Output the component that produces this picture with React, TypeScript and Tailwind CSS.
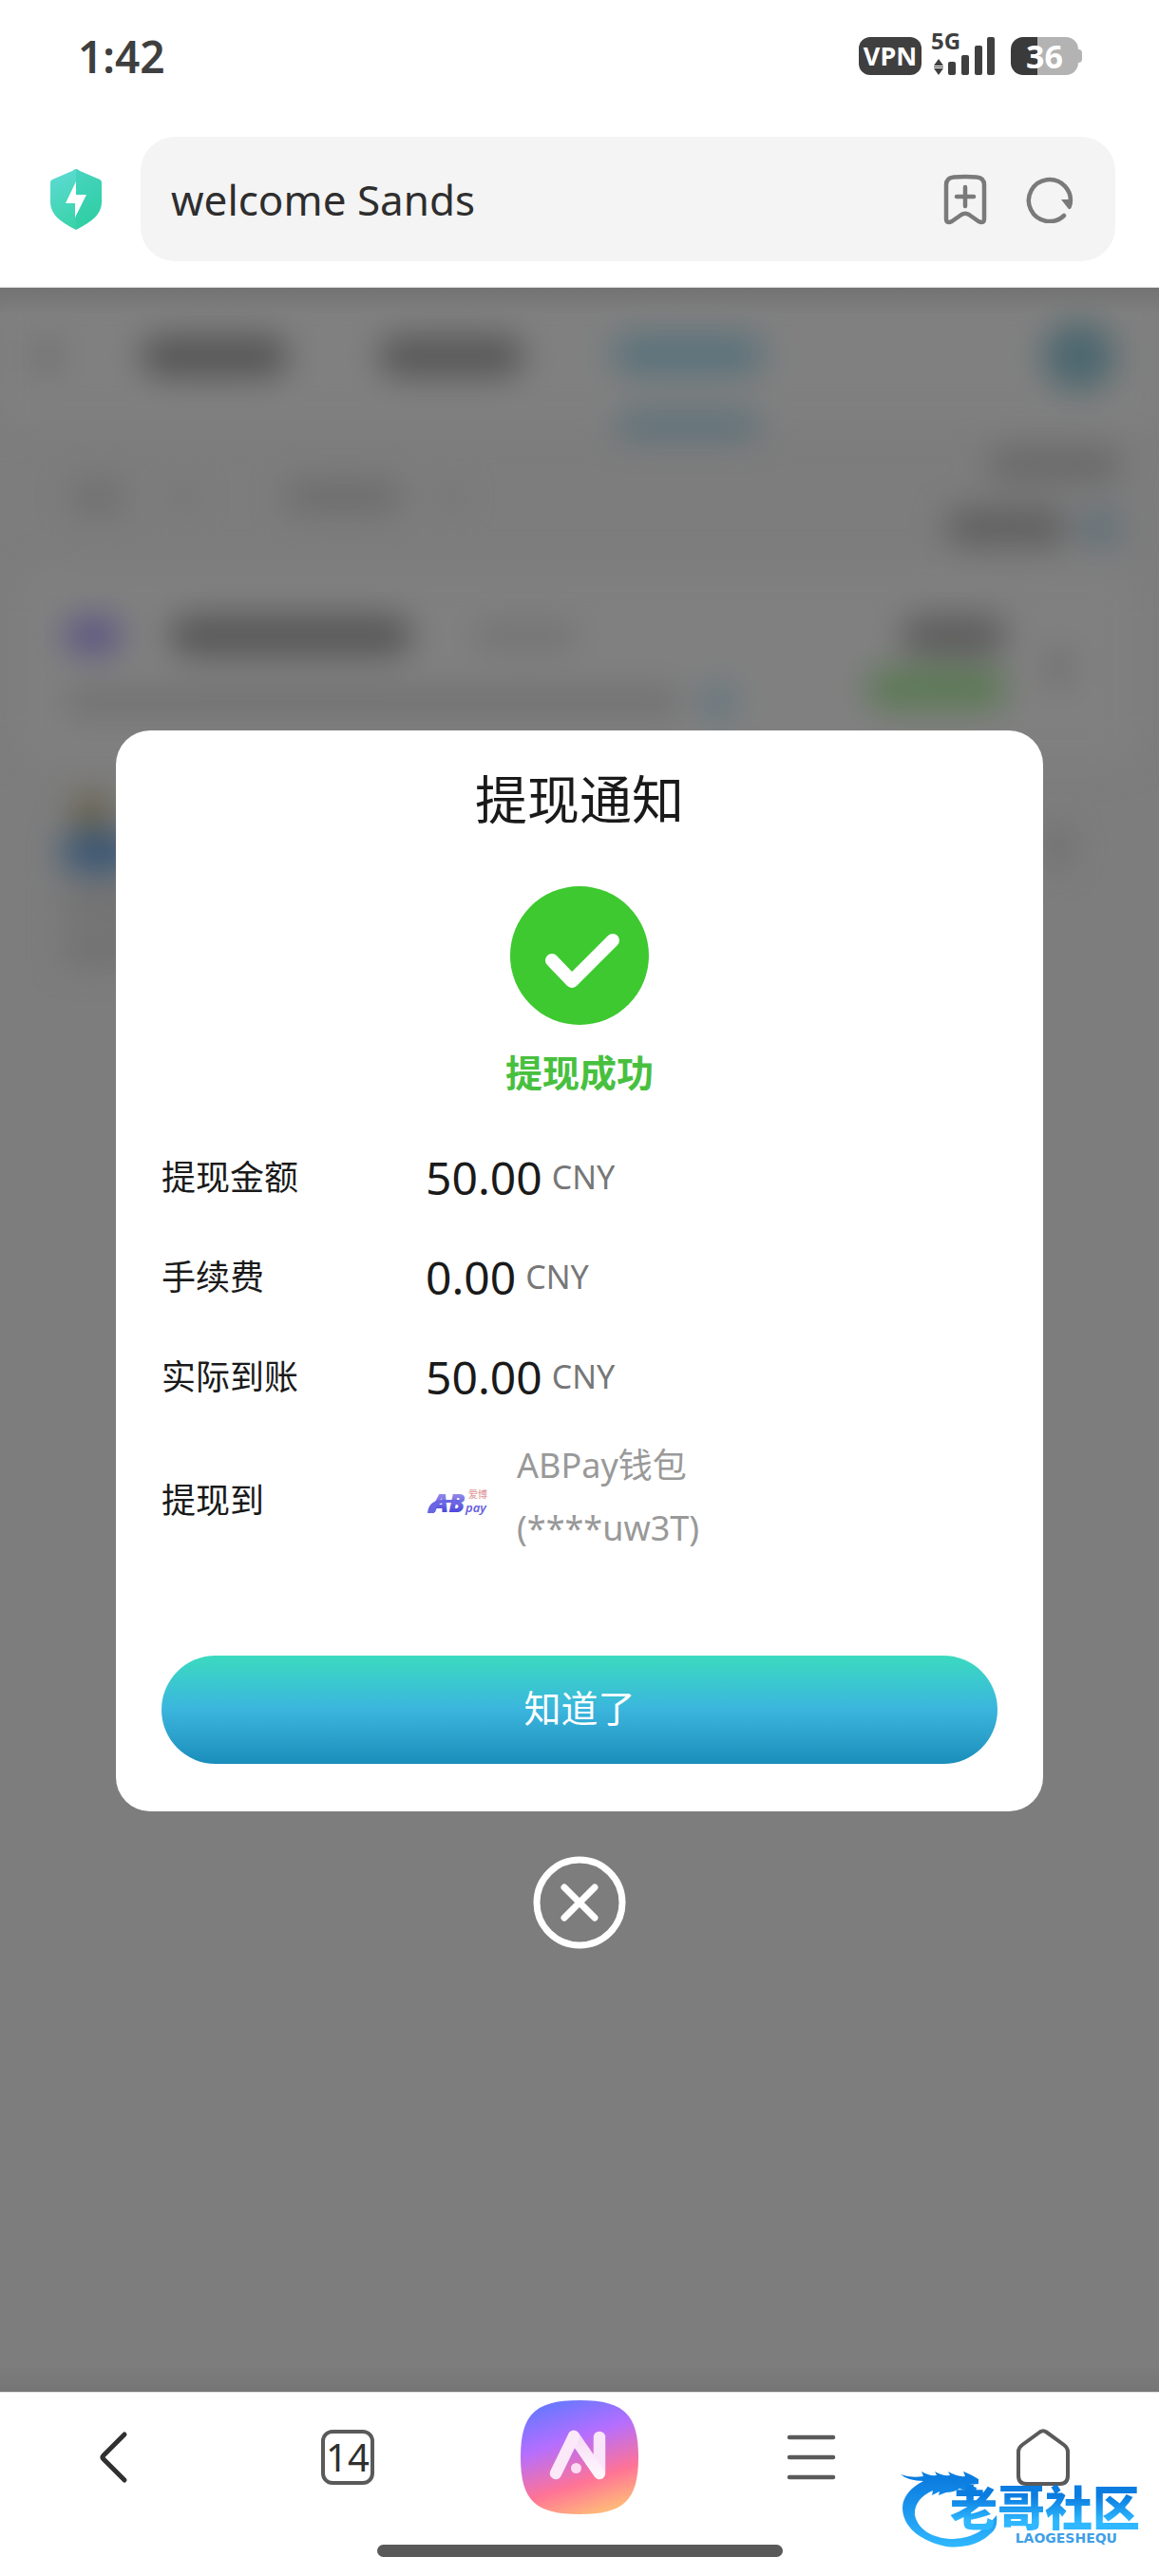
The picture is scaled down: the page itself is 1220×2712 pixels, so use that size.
import type { ReactNode } from "react";

const amounts = [
  { label: "提现金额", value: "50.00" },
  { label: "手续费", value: "0.00" },
  { label: "实际到账", value: "50.00" },
];

function StatusBar() {
  return (
    <div className="flex h-[118px] items-center justify-between pl-[82px] pr-[81px] text-[#3f3f3f]">
      <span className="text-[46px] font-semibold leading-[60px]">1:42</span>
      <div className="flex items-center">
        <span className="flex h-10 w-[66px] items-center justify-center rounded-xl bg-[#3f3f3f] text-[27px] font-bold text-white">
          VPN
        </span>
        <div className="relative ml-2 mr-4 h-10 w-[70px]">
          <span className="absolute -top-2 left-0.5 text-[24px] font-bold leading-6">5G</span>
          <svg viewBox="0 0 70 40" className="h-full w-full" fill="currentColor">
            <path d="M10 23l5 7H5zM10 40l5-7H5zM5 31h10v1H5z" />
            <rect x="20" y="26" width="8" height="14" rx="2" />
            <rect x="34" y="19" width="8" height="21" rx="2" />
            <rect x="48" y="9" width="8" height="31" rx="2" />
            <rect x="61" y="0" width="8" height="40" rx="2" />
          </svg>
        </div>
        <div className="flex items-center">
          <span className="flex h-10 w-[71px] items-center justify-center rounded-[13px] bg-linear-to-r from-[#3a3a3a] from-40% to-[#b3b3b3] to-40% text-[34px] font-bold text-white">
            36
          </span>
          <span className="h-3.5 w-1 rounded-r-sm bg-[#b3b3b3]" />
        </div>
      </div>
    </div>
  );
}

function AddressBar() {
  return (
    <div className="flex items-center pl-[52px] pr-[46px] pt-[26px] pb-[27px]">
      <svg viewBox="0 0 56 64" className="mr-10 h-16 w-14 shrink-0">
        <defs>
          <linearGradient id="shield" x1="0" y1="0" x2="0.4" y2="1">
            <stop offset="0" stopColor="#5fdbd6" />
            <stop offset="1" stopColor="#38d3a8" />
          </linearGradient>
        </defs>
        <path
          d="M28 0Q30 0 32 2L53 11Q55 12 55 14V34C55 48 45 55 28 64C11 55 1 48 1 34V14Q1 12 3 11L24 2Q26 0 28 0Z"
          fill="url(#shield)"
        />
        <path d="M28 0Q30 0 32 2L53 11Q55 12 55 14V34C55 48 45 55 28 64Z" fill="#22c7a0" opacity="0.3" />
        <path d="M28 13L17 36H27V51L39 27H28Z" fill="#fff" />
      </svg>
      <div className="flex h-[131px] flex-1 items-center rounded-[36px] bg-[#f4f4f4] pl-8 pr-11 text-[#7a7a7a]">
        <input
          aria-label="Address"
          defaultValue="welcome Sands"
          className="min-w-0 flex-1 bg-transparent text-[44px] text-[#2e2e2e] outline-none"
        />
        <button aria-label="Bookmark" className="mr-10">
          <svg viewBox="0 0 48 54" className="h-[54px] w-12" fill="none" stroke="currentColor" strokeWidth="4.5" strokeLinecap="round" strokeLinejoin="round">
            <path d="M4 12Q4 4 12 3.500Q24 2.500 36 3.500Q44 4 44 12V47Q44 53 38 50L28 43Q24 40.500 20 43L10 50Q4 53 4 47Z" />
            <path d="M24 14V34M15 24H33" />
          </svg>
        </button>
        <button aria-label="Reload">
          <svg viewBox="0 0 50 50" className="h-[50px] w-[50px]" fill="none" stroke="currentColor" strokeWidth="4.500" strokeLinecap="round">
            <path d="M40 42A22 22 0 1 1 46.500 30" />
            <path d="M37 25H48V33Q46 37 44 34Z" fill="currentColor" stroke="none" />
          </svg>
        </button>
      </div>
    </div>
  );
}

function Smudge({ className }: { className: string }) {
  return <span className={`block rounded-full ${className}`} />;
}

// History page behind the dialog, fully out of focus
function Backdrop() {
  return (
    <div aria-hidden="true" className="absolute inset-0 overflow-hidden bg-[#7d7d7d]">
      <div className="blur-[17px]">
        <div className="flex h-36 items-center bg-[#808080] pl-10 pr-[46px]">
          <Smudge className="h-10 w-5 bg-[#6b6b6b]" />
          <Smudge className="ml-[88px] h-11 w-[156px] bg-[#565656]" />
          <Smudge className="ml-[94px] h-11 w-[154px] bg-[#585858]" />
          <div className="ml-[92px] flex flex-col items-center gap-10 pt-[60px]">
            <Smudge className="h-11 w-[160px] bg-[#5a727b]" />
            <Smudge className="h-6 w-[150px] bg-[#566f79]" />
          </div>
          <Smudge className="ml-auto h-[72px] w-[76px] bg-[#4c676f]" />
        </div>
        <div className="flex items-start pl-[75px] pr-10 pt-6">
          <Smudge className="mt-9 h-8 w-14 bg-[#6e6e6e]" />
          <Smudge className="ml-14 mt-10 h-6 w-4 bg-[#6f6f6f]" />
          <Smudge className="ml-24 mt-9 h-8 w-[124px] bg-[#6c6c6c]" />
          <Smudge className="ml-11 mt-10 h-6 w-4 bg-[#707070]" />
          <div className="ml-auto flex flex-col items-end gap-7">
            <Smudge className="h-9 w-[140px] bg-[#696969]" />
            <div className="flex gap-3">
              <Smudge className="h-10 w-[128px] bg-[#606060]" />
              <Smudge className="h-10 w-11 bg-[#62717a]" />
            </div>
          </div>
        </div>
        <div className="mx-6 mt-6 flex h-[204px] items-start rounded-3xl bg-[#808080] pl-11 pr-[72px] pt-12">
          <div className="flex flex-col gap-8">
            <div className="flex items-center">
              <Smudge className="h-10 w-[60px] bg-[#5c5582]" />
              <Smudge className="ml-[50px] h-11 w-[256px] bg-[#585858]" />
              <Smudge className="ml-16 h-7 w-[110px] bg-[#737373]" />
            </div>
            <div className="flex items-center">
              <Smudge className="h-7 w-[650px] bg-[#707070]" />
              <Smudge className="ml-6 h-8 w-7 bg-[#567280]" />
            </div>
          </div>
          <div className="ml-auto flex flex-col items-end gap-3">
            <Smudge className="h-11 w-[112px] bg-[#5e5e5e]" />
            <Smudge className="h-11 w-[148px] bg-[#5c7955]" />
          </div>
          <Smudge className="ml-11 mt-9 h-10 w-5 bg-[#6a6a6a]" />
        </div>
        <div className="mx-6 mt-4 flex items-start pl-10 pr-[72px] pt-4">
          <div className="flex flex-col">
            <Smudge className="ml-3 h-10 w-10 bg-[#665f48]" />
            <Smudge className="h-11 w-20 bg-[#3a5674]" />
            <Smudge className="mt-4 h-8 w-[300px] bg-[#707070]" />
            <Smudge className="mt-4 h-8 w-[300px] bg-[#707070]" />
          </div>
          <Smudge className="ml-auto mt-9 h-10 w-5 bg-[#6a6a6a]" />
        </div>
      </div>
      <div className="absolute inset-x-0 top-0 h-7 bg-linear-to-b from-[#737373] to-transparent" />
      <div className="absolute inset-x-0 bottom-0 h-7 bg-linear-to-t from-[#757575] to-transparent" />
    </div>
  );
}

function WalletLogo() {
  return (
    <svg viewBox="-2 -8 68 46" className="h-[46px] w-[68px] shrink-0">
      <defs>
        <linearGradient id="wallet" x1="0" y1="0" x2="0" y2="1">
          <stop offset="0.2" stopColor="#9a92ea" />
          <stop offset="0.8" stopColor="#4b45dc" />
        </linearGradient>
      </defs>
      <text x="4" y="27" fontSize="27" fontWeight="900" fontStyle="italic" fill="url(#wallet)">AB</text>
      <path d="M0 28Q1 15 15 14H34V17H18Q9 17 7 28Z" fill="#6a65e3" />
      <text x="43" y="12" fontSize="10" fontWeight="500" fill="#df9a9c">爱博</text>
      <text x="40" y="27" fontSize="13" fontWeight="600" fontStyle="italic" fill="#6660dd">pay</text>
    </svg>
  );
}

function Row({ label, children }: { label: string; children: ReactNode }) {
  return (
    <div className="flex min-h-[105px] items-center">
      <dt className="w-[278px] shrink-0 text-[36px] text-[#1a1a1a]">{label}</dt>
      <dd className="flex items-center">{children}</dd>
    </div>
  );
}

function WithdrawDialog() {
  return (
    <div className="absolute inset-0 flex flex-col items-center justify-center">
      <section role="dialog" aria-labelledby="dialog-title" className="flex w-4/5 flex-col rounded-[36px] bg-white px-12 pb-[50px] pt-8">
        <h1 id="dialog-title" className="text-center text-[55px] leading-[80px] text-[#1a1a1a]">提现通知</h1>
        <svg viewBox="0 0 146 146" className="mx-auto mt-[52px] h-[146px] w-[146px]">
          <circle cx="73" cy="73" r="73" fill="#3dc92f" />
          <path d="M44 78L65 100L108 57" fill="none" stroke="#fff" strokeWidth="14" strokeLinecap="round" strokeLinejoin="round" />
        </svg>
        <p className="mt-5 text-center text-[39px] font-bold leading-[60px] text-[#48c03f]">提现成功</p>
        <dl className="mt-7">
          {amounts.map(({ label, value }) => (
            <Row key={label} label={label}>
              <span className="text-[48px] text-[#1a1a1a]">{value}</span>
              <span className="ml-2.5 text-[34px] text-[#777]">CNY</span>
            </Row>
          ))}
          <div className="pt-2">
            <Row label="提现到">
              <WalletLogo />
              <span className="ml-7 pb-2 text-[36px] leading-[66px] text-[#999]">
                ABPay钱包
                <br />
                (****uw3T)
              </span>
            </Row>
          </div>
        </dl>
        <button className="mt-[93px] h-[114px] rounded-full bg-linear-to-b from-[#3cdabf] via-[#3bb5dd] to-[#1a8ebb] pb-1 text-[39px] text-white">
          知道了
        </button>
      </section>
      <button aria-label="Close" className="mt-[47px]">
        <svg viewBox="0 0 98 98" className="h-[98px] w-[98px]" fill="none" stroke="#fff" strokeWidth="7" strokeLinecap="round">
          <circle cx="49" cy="49" r="45" />
          <path d="M33 33L65 65M65 33L33 65" />
        </svg>
      </button>
    </div>
  );
}

function AiLogo() {
  return (
    <svg viewBox="0 0 124 120" className="h-[120px] w-[124px]">
      <defs>
        <linearGradient id="ai" x1="0.28" y1="0" x2="0.62" y2="1">
          <stop offset="0" stopColor="#6678ff" />
          <stop offset="0.35" stopColor="#b56eff" />
          <stop offset="0.72" stopColor="#ff7396" />
          <stop offset="1" stopColor="#ffb87a" />
        </linearGradient>
        <linearGradient id="ai-leg" x1="0" y1="0" x2="0" y2="1">
          <stop offset="0" stopColor="#f6dcf6" />
          <stop offset="1" stopColor="#fff6fd" />
        </linearGradient>
      </defs>
      <path d="M62 0C108 0 124 14 124 60S108 120 62 120S0 106 0 60S16 0 62 0Z" fill="url(#ai)" />
      <g fill="none" strokeWidth="12.500" strokeLinecap="round" strokeLinejoin="round">
        <path d="M83 39V74" stroke="#f9e6fa" />
        <path d="M56 38L83 77" stroke="url(#ai-leg)" />
        <path d="M37 77L56 38" stroke="#fbe8f8" />
      </g>
      <circle cx="58.500" cy="71.500" r="5.500" fill="#fbdcf1" />
    </svg>
  );
}

function Watermark() {
  return (
    <div className="absolute bottom-[28px] right-5 flex h-[90px] w-[252px] flex-col items-end pt-[22px]">
      <svg viewBox="0 0 104 90" className="absolute left-0 top-0 h-[90px] w-[104px]">
        <defs>
          <linearGradient id="dragon" x1="0" y1="0" x2="0" y2="1">
            <stop offset="0.1" stopColor="#0b7ce0" />
            <stop offset="1" stopColor="#2fb8ff" />
          </linearGradient>
        </defs>
        <path
          d="M0 11Q10 15 24 13L22 8Q30 13 38 12L36 8Q44 13 52 12L50 8Q60 14 68 13L66 8Q76 12 82 16V21L72 22L80 25Q80 30 74 30L62 26Q56 30 48 30L40 33L41 29L33 33L34 28C20 34 14 44 15 54C19 72 38 79 56 79C78 78 90 68 101 54Q103 68 94 74C82 86 60 90 44 86C20 80 2 66 2 46C2 34 12 24 24 18Q8 18 0 11Z"
          fill="url(#dragon)"
        />
      </svg>
      <span className="relative bg-linear-to-b from-[#0b7ce0] from-25% to-[#2fb8ff] to-80% bg-clip-text text-[50px] font-black leading-[48px] text-transparent">
        老哥社区
      </span>
      <span className="relative mr-6 font-['DejaVu_Sans',sans-serif] text-[14px] font-bold leading-4 text-[#3f9fe6]">
        LAOGESHEQU
      </span>
    </div>
  );
}

function NavBar() {
  return (
    <footer className="relative h-[194px] border-t border-[#ddd] bg-white text-[#5a5a5a]">
      <nav className="grid grid-cols-5 place-items-center pt-2">
        <button aria-label="Back" className="text-[#303030]">
          <svg viewBox="0 0 60 60" className="h-[60px] w-[60px]" fill="none" stroke="currentColor" strokeWidth="5" strokeLinecap="round" strokeLinejoin="round">
            <path d="M39 6L17 28Q15 30 17 32L39 54" />
          </svg>
        </button>
        <button className="flex h-[58px] w-14 items-center justify-center rounded-xl border-4 border-[#5a5a5a] text-[40px] text-[#303030]">
          14
        </button>
        <button aria-label="AI">
          <AiLogo />
        </button>
        <button aria-label="Menu">
          <svg viewBox="0 0 52 52" className="h-[52px] w-[52px]" stroke="currentColor" strokeWidth="4.500" strokeLinecap="round">
            <path d="M3 5H49M3 26H49M3 47H49" />
          </svg>
        </button>
        <button aria-label="Home">
          <svg viewBox="0 0 56 60" className="h-[60px] w-14" fill="none" stroke="currentColor" strokeWidth="4" strokeLinejoin="round">
            <path d="M24.500 3.500Q28 1 31.500 3.500L50 17Q54 20 54 24V49Q54 58 46 58H10Q2 58 2 49V24Q2 20 6 17Z" />
          </svg>
        </button>
      </nav>
      <div className="mx-auto mt-8 h-[13px] w-[35%] rounded-full bg-[#595959]" />
      <Watermark />
    </footer>
  );
}

export default function App() {
  return (
    <div className="flex min-h-screen flex-col bg-white font-['Noto_Sans','Noto_Sans_CJK_SC',sans-serif]">
      <header className="border-b border-[#ddd]">
        <StatusBar />
        <AddressBar />
      </header>
      <main className="relative min-h-[1400px] flex-1">
        <Backdrop />
        <WithdrawDialog />
      </main>
      <NavBar />
    </div>
  );
}
